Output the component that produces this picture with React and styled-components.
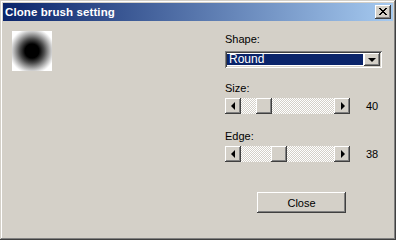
import React from "react";
import styled, { createGlobalStyle } from "styled-components";

const Global = createGlobalStyle`
  html, body { margin: 0; padding: 0; background: #d4d0c8; }
  body { font-family: "Liberation Sans", Arial, sans-serif; font-size: 11px; color: #000; }
`;

const Window = styled.div`
  width: 396px;
  height: 240px;
  box-sizing: border-box;
  padding: 3px;
  background: #d4d0c8;
  box-shadow: inset -1px -1px #404040, inset 1px 1px #d4d0c8,
    inset -2px -2px #808080, inset 2px 2px #ffffff;
  display: flex;
  flex-direction: column;
`;

const TitleBar = styled.div`
  height: 18px;
  flex: none;
  display: flex;
  align-items: center;
  justify-content: space-between;
  padding: 0 2px 0 2px;
  background: linear-gradient(to right, #0a246a, #a6caf0);
  color: #fff;
`;

const Title = styled.span`
  font-family: "Liberation Sans", Arial, sans-serif;
  font-weight: bold;
  font-size: 11.5px;
  letter-spacing: 0.1px;
  line-height: 18px;
`;

const Raised = styled.div`
  background: #d4d0c8;
  box-sizing: border-box;
  box-shadow: inset -1px -1px #404040, inset 1px 1px #ffffff,
    inset -2px -2px #808080, inset 2px 2px #d4d0c8;
  display: flex;
  align-items: center;
  justify-content: center;
  flex: none;
`;

const CaptionButton = styled(Raised)`
  width: 16px;
  height: 14px;
  padding-bottom: 1px;
`;

const Body = styled.div`
  flex: 1;
  display: flex;
  align-items: flex-start;
  padding: 10px 0 0 9px;
`;

const Preview = styled.div`
  width: 40px;
  height: 40px;
  flex: none;
  background: radial-gradient(circle at 50% 50%, #000 0, #000 7px, #1e1e1e 9px, #4a4a4a 12px, #808080 15px, #b4b4b4 18px, #e4e4e4 21px, #fff 23px);
`;

const Controls = styled.div`
  margin-left: 173px;
  width: 160px;
  display: flex;
  flex-direction: column;
`;

const Label = styled.div`
  line-height: 14px;
  height: 14px;
  margin-top: ${(p) => p.$top}px;
`;

const Combo = styled.div`
  margin-top: 5px;
  width: 157px;
  height: 17px;
  box-sizing: border-box;
  padding: 2px;
  background: #fff;
  box-shadow: inset 1px 1px #808080, inset -1px -1px #ffffff,
    inset 2px 2px #404040, inset -2px -2px #d4d0c8;
  display: flex;
`;

const ComboText = styled.div`
  flex: 1;
  margin: 1px 1px 1px 0;
  background: #0a246a;
  color: #fff;
  font-size: 12px;
  line-height: 11px;
  padding-left: 2px;
`;

const DropButton = styled(Raised)`
  width: 16px;
  height: 13px;
`;

const DownArrow = styled.div`
  width: 0;
  height: 0;
  border-left: 4px solid transparent;
  border-right: 4px solid transparent;
  border-top: 4px solid #000;
  margin-top: 1px;
`;

const SliderRow = styled.div`
  margin-top: 3px;
  display: flex;
  align-items: center;
`;

const ScrollBar = styled.div`
  width: 125px;
  height: 16px;
  display: flex;
`;

const ArrowButton = styled(Raised)`
  width: 16px;
  height: 16px;
`;

const Arrow = styled.div`
  width: 0;
  height: 0;
  border-top: 4px solid transparent;
  border-bottom: 4px solid transparent;
  ${(p) => (p.$dir === "left" ? "border-right: 4px solid #000; margin-right: 1px;" : "border-left: 4px solid #000; margin-left: 1px;")}
`;

const Track = styled.div`
  flex: 1;
  display: flex;
  background-image: repeating-conic-gradient(#ffffff 0 25%, #d4d0c8 0 50%);
  background-size: 2px 2px;
`;

const Thumb = styled(Raised)`
  width: 16px;
  height: 16px;
  margin-left: ${(p) => p.$offset}px;
`;

const Value = styled.div`
  margin-left: 16px;
  line-height: 16px;
`;

const ButtonRow = styled.div`
  margin-top: 30px;
  padding-left: 32px;
  display: flex;
`;

const PushButton = styled(Raised)`
  width: 89px;
  height: 21px;
  font-size: 11px;
  padding-top: 1px;
`;

function Slider({ label, top, value, offset }) {
  return (
    <>
      <Label $top={top}>{label}</Label>
      <SliderRow>
        <ScrollBar>
          <ArrowButton><Arrow $dir="left" /></ArrowButton>
          <Track><Thumb $offset={offset} /></Track>
          <ArrowButton><Arrow $dir="right" /></ArrowButton>
        </ScrollBar>
        <Value>{value}</Value>
      </SliderRow>
    </>
  );
}

export default function App() {
  return (
    <>
      <Global />
      <Window>
        <TitleBar>
          <Title>Clone brush setting</Title>
          <CaptionButton>
            <svg width="8" height="7" viewBox="0 0 8 7" shapeRendering="crispEdges">
              <path d="M0 0h2v1H0zM6 0h2v1H6zM1 1h2v1H1zM5 1h2v1H5zM2 2h4v1H2zM3 3h2v1H3zM2 4h4v1H2zM1 5h2v1H1zM5 5h2v1H5zM0 6h2v1H0zM6 6h2v1H6z" fill="#000" />
            </svg>
          </CaptionButton>
        </TitleBar>
        <Body>
          <Preview />
          <Controls>
            <Label $top={1}>Shape:</Label>
            <Combo>
              <ComboText>Round</ComboText>
              <DropButton><DownArrow /></DropButton>
            </Combo>
            <Slider label="Size:" top={13} value="40" offset={15} />
            <Slider label="Edge:" top={15} value="38" offset={30} />
            <ButtonRow>
              <PushButton>Close</PushButton>
            </ButtonRow>
          </Controls>
        </Body>
      </Window>
    </>
  );
}
